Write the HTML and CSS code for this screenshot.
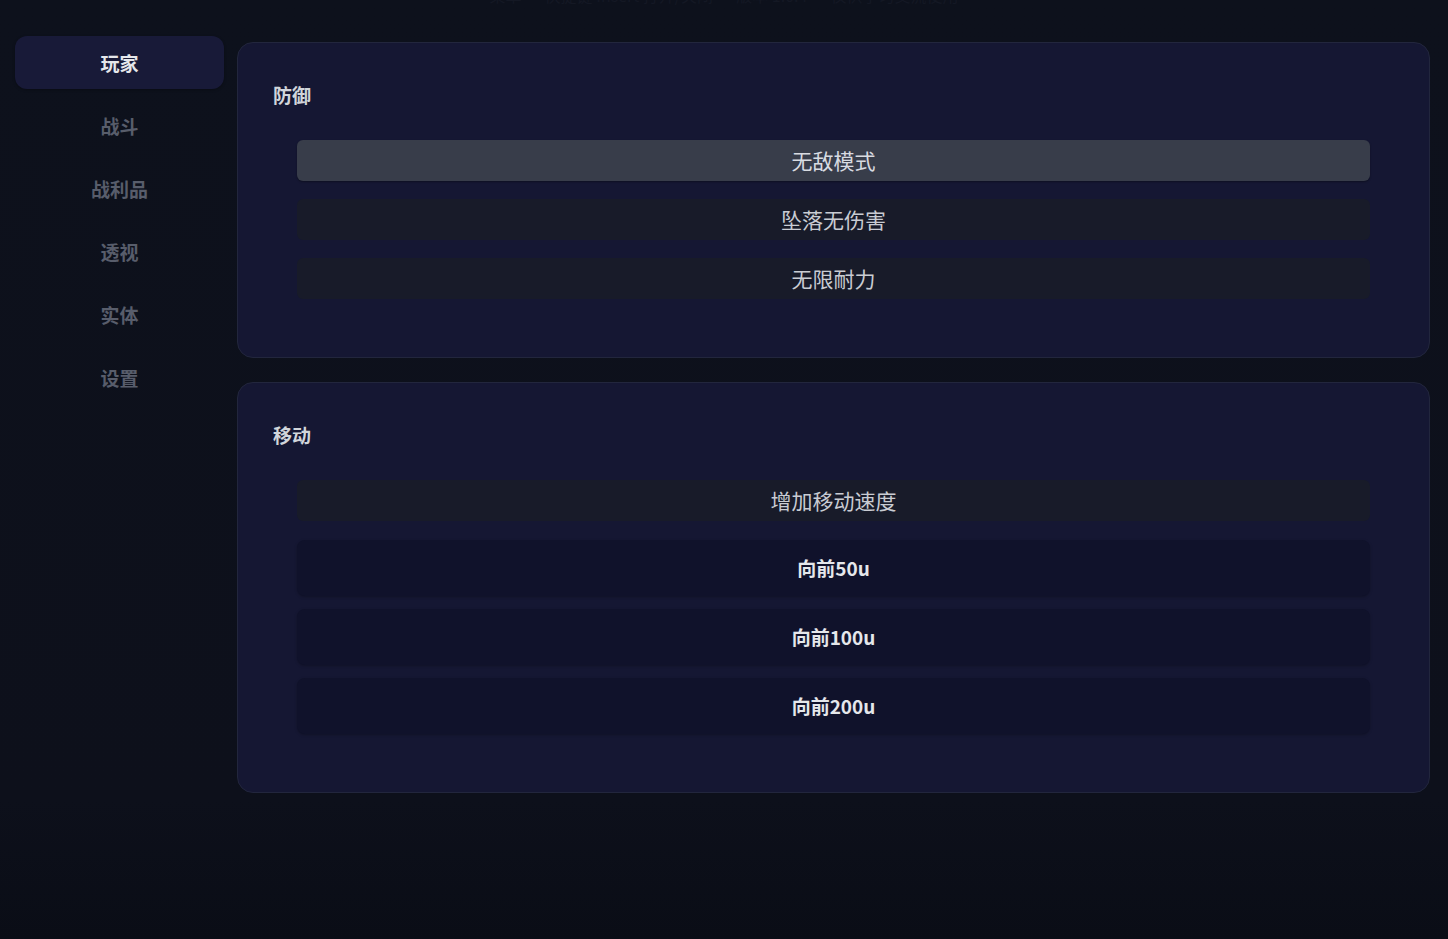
FILE: index.html
```html
<!DOCTYPE html>
<html>
    <head>
        <title>玩家</title>
        <meta charset="UTF-8">
        <meta name="viewport" content="width=device-width, initial-scale=1">
        <link rel="stylesheet" href="styles.css">
    </head>
    <body>
        <div class="topline"><span>菜单 · 快捷键 Insert 打开/关闭 · 版本 1.0.4 · 仅供学习交流使用</span></div>

        <div class="layout">
            <div class="sidebar noselect">
                <div class="nav-item active">玩家</div>
                <div class="nav-item">战斗</div>
                <div class="nav-item">战利品</div>
                <div class="nav-item">透视</div>
                <div class="nav-item">实体</div>
                <div class="nav-item">设置</div>
            </div>

            <div class="content">
                <div class="panel">
                    <h2 class="panel-title">防御</h2>
                    <div class="panel-list">
                        <div class="toggle on">无敌模式</div>
                        <div class="toggle">坠落无伤害</div>
                        <div class="toggle">无限耐力</div>
                    </div>
                </div>

                <div class="panel">
                    <h2 class="panel-title">移动</h2>
                    <div class="panel-list">
                        <div class="toggle">增加移动速度</div>
                        <div class="action-list">
                            <div class="action">向前50u</div>
                            <div class="action">向前100u</div>
                            <div class="action">向前200u</div>
                        </div>
                    </div>
                </div>
            </div>
        </div>
    </body>
</html>
```

FILE: styles.css
```css
.noselect {
    user-select: none;
    -moz-user-select: none;
    -webkit-user-select: none;
}

html {
    background: linear-gradient(#0d111c, #0d101b 800px, #0a0d16);
    min-height: 100%;
}

body {
    margin: 0;
    font-family: "Noto Sans CJK SC", "Noto Sans", sans-serif;
    color: #d1d5db;
}

.topline {
    height: 6px;
    overflow: hidden;
    text-align: center;
    color: #141824;
    font-size: 16px;
}

.topline span {
    display: block;
    margin-top: -15px;
    line-height: 20px;
}

.layout {
    display: flex;
    align-items: flex-start;
    gap: 13px;
    padding: 30px 18px 0 15px;
}

.sidebar {
    width: 209px;
    flex-shrink: 0;
    display: flex;
    flex-direction: column;
    gap: 10px;
}

.nav-item {
    height: 53px;
    line-height: 53px;
    text-align: center;
    font-size: 19px;
    font-weight: 700;
    color: #585d6b;
    border-radius: 12px;
    cursor: pointer;
}

.nav-item.active {
    background-color: #181a38;
    color: #e5e7eb;
    box-shadow: 0 1px 3px rgba(0, 0, 0, 0.3);
}

.content {
    flex: 1;
    display: flex;
    flex-direction: column;
    gap: 24px;
    padding-top: 6px;
}

.panel {
    background-color: #151733;
    border: 1px solid #22263d;
    border-radius: 16px;
    padding: 39px 35px 58px 35px;
}

.panel-title {
    margin: 0 0 32px 0;
    font-size: 19px;
    line-height: 26px;
    font-weight: 700;
    color: #d1d5db;
}

.panel-list {
    display: flex;
    flex-direction: column;
    gap: 18px;
    margin: 0 24px;
}

.toggle {
    height: 41px;
    line-height: 41px;
    text-align: center;
    font-size: 21px;
    color: #c9ccd3;
    background-color: #181b29;
    border-radius: 6px;
    cursor: pointer;
}

.toggle.on {
    background-color: #383d4a;
    color: #d8dbe1;
    box-shadow: 0 1px 2px rgba(0, 0, 0, 0.35);
}

.action-list {
    display: flex;
    flex-direction: column;
    gap: 13px;
    margin-top: 1px;
}

.action {
    height: 56px;
    line-height: 56px;
    text-align: center;
    font-size: 19px;
    font-weight: 700;
    color: #e5e7eb;
    background-color: #10122b;
    border-radius: 8px;
    box-shadow: 0 1px 3px rgba(0, 0, 0, 0.25);
    cursor: pointer;
}
```
